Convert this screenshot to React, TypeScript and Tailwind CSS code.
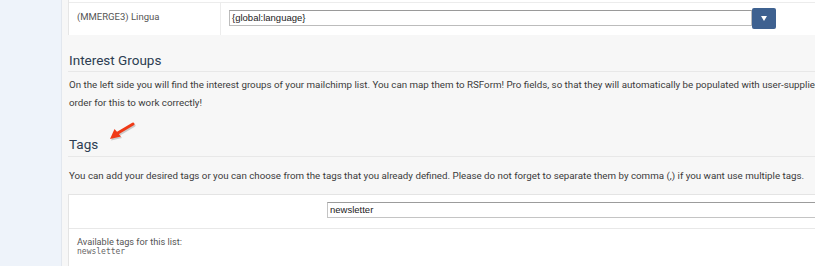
import React from 'react';

function Arrow() {
  return (
    <svg
      className="absolute left-[106px] top-[120px]"
      width="32"
      height="24"
      viewBox="0 0 32 24"
    >
      <g opacity="0.22" transform="translate(1,1.5)">
        <line x1="27" y1="4" x2="11" y2="13.5" stroke="#333" strokeWidth="3" strokeLinecap="round" />
        <polygon points="4,19 8.5,9 15,16.5" fill="#333" />
      </g>
      <line x1="27" y1="4" x2="11" y2="13.5" stroke="#f03a17" strokeWidth="3" strokeLinecap="round" />
      <polygon points="4,19 8.5,9 15,16.5" fill="#f03a17" />
    </svg>
  );
}

export default function App() {
  return (
    <div className="relative flex w-[815px] h-[266px] overflow-hidden font-['Roboto','Liberation_Sans',sans-serif]">
      <div className="w-[62px] shrink-0 bg-[#eef3fa] border-r border-[#e2e7ee]" />
      <div className="w-[900px] shrink-0 bg-[#f7f7f7] pl-[6px]">
        {/* mapping table */}
        <div className="bg-white border-l border-[#e6e6e6]">
          <div className="h-[3px] border-b border-[#ececec]" />
          <div className="flex h-[32px]">
            <div className="w-[152px] border-r border-[#ececec] pl-[8px] pt-[7px] text-[9.5px] text-[#555]">
              (MMERGE3) Lingua
            </div>
            <div className="flex items-start pl-[8px] pt-[5px]">
              <div className="mt-[2px] w-[523px] h-[16px] bg-white border border-[#bcbcbc] border-t-[#9a9a9a] pl-[2px] text-[9.5px] leading-[14px] text-[#222] font-['Liberation_Sans',sans-serif]">
                {'{global:language}'}
              </div>
              <div className="w-[24px] h-[21px] rounded-[2px] bg-[#3e6190] flex items-center justify-center">
                <svg width="6" height="5" viewBox="0 0 6 5">
                  <polygon points="0,0 6,0 3,5" fill="#fff" />
                </svg>
              </div>
            </div>
          </div>
        </div>

        {/* interest groups */}
        <div className="pt-[16px]">
          <h2 className="pl-[1px] text-[13.5px] leading-[18px] text-[#2d3d52] pb-[2px] border-b border-[#e8e8e8]">
            Interest Groups
          </h2>
          <p className="pl-[1px] pt-[4px] text-[9.75px] leading-[18px] text-[#3a3a3a] whitespace-nowrap">
            On the left side you will find the interest groups of your mailchimp list. You can map them to RSForm! Pro fields, so that they will automatically be populated with user-supplied data.
            <br />
            order for this to work correctly!
          </p>
        </div>

        {/* tags */}
        <div className="pt-[23px]">
          <h2 className="pl-[1px] text-[13.5px] leading-[18px] text-[#2d3d52] pb-[3px] border-b border-[#e8e8e8]">
            Tags
          </h2>
          <p className="pl-[1px] pt-[12px] pb-[11px] text-[9.75px] leading-[14px] text-[#3a3a3a] whitespace-nowrap">
            You can add your desired tags or you can choose from the tags that you already defined. Please do not forget to separate them by comma (,) if you want use multiple tags.
          </p>
        </div>

        {/* tags card */}
        <div className="bg-white border-t border-l border-[#e4e4e4]">
          <div className="h-[34px] border-b border-[#e8e8e8] pl-[258px] pt-[7px]">
            <div className="w-[560px] h-[16px] border border-[#c4c4c4] border-t-[#9c9c9c] pl-[2px] text-[9.5px] leading-[14px] text-[#222] font-['Liberation_Sans',sans-serif]">
              newsletter
            </div>
          </div>
          <div className="pl-[8px] pt-[7px] h-[40px]">
            <div className="text-[9.2px] leading-[11px] text-[#555]">Available tags for this list:</div>
            <div className="text-[8px] leading-[10px] text-[#666] font-['DejaVu_Sans_Mono',monospace]">newsletter</div>
          </div>
        </div>
      </div>
      <Arrow />
    </div>
  );
}
